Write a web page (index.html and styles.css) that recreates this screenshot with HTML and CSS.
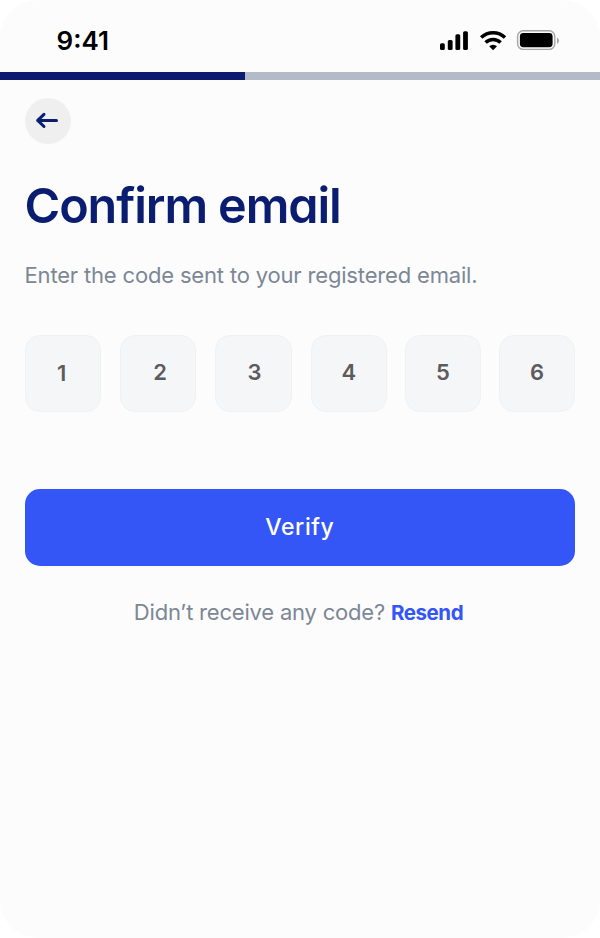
FILE: index.html
```html
<!DOCTYPE html>
<html lang="en">
<head>
<meta charset="utf-8">
<title>Confirm email</title>
<link rel="stylesheet" href="styles.css">
</head>
<body>
<main class="screen">
  <header class="status">
    <span class="time">9:41</span>
    <svg class="indicators" width="120" height="24" viewBox="0 0 120 24">
      <rect x="0" y="13.3" width="4.8" height="6.7" rx="1.5"/>
      <rect x="7.8" y="10" width="4.8" height="10" rx="1.5"/>
      <rect x="15.4" y="4.3" width="4.8" height="15.7" rx="1.5"/>
      <rect x="23.1" y="1.2" width="4.8" height="18.8" rx="1.5"/>
      <g fill="none" stroke="#000" stroke-width="3.5">
        <path d="M41.2 7.6a17.2 17.2 0 0 1 23.8 0"/>
        <path d="M45.6 12.6a10.8 10.8 0 0 1 15 0"/>
      </g>
      <path d="M53.1 20.2l-3.9-3.9a5.6 5.6 0 0 1 7.8 0z"/>
      <rect x="77.6" y="0.8" width="37.2" height="18.6" rx="5.6" fill="none" stroke="#a5a5a5" stroke-width="1.4"/>
      <rect x="79.9" y="3" width="32.7" height="14.2" rx="3.4"/>
      <path d="M117 7.8c2.6 1.2 2.6 4.8 0 6z" fill="#a5a5a5"/>
    </svg>
  </header>
  <div class="progress"><div class="progress-value"></div></div>
  <div class="content">
    <button class="back" aria-label="Back">
      <svg width="24" height="20" viewBox="0 0 24 20"><path d="M21.5 10.4H2.7M9 4.3L2.7 10.4L9 16.5" fill="none" stroke="#0a1d70" stroke-width="3" stroke-linecap="round" stroke-linejoin="round"/></svg>
    </button>
    <h1 class="title">Confirm email</h1>
    <p class="subtitle">Enter the code sent to your registered email.</p>
    <div class="code">
      <span class="digit digit-1">1</span>
      <span class="digit digit-2">2</span>
      <span class="digit digit-3">3</span>
      <span class="digit">4</span>
      <span class="digit">5</span>
      <span class="digit">6</span>
    </div>
    <button class="verify">Verify</button>
    <p class="resend"><span class="question">Didn’t receive any code?</span> <a class="resend-link">Resend</a></p>
  </div>
</main>
</body>
</html>
```
FILE: styles.css
```css
* { box-sizing: border-box; }
body { margin: 0; background: #fff; font-family: Inter, "Liberation Sans", sans-serif; }
button { border: 0; padding: 0; font-family: inherit; }
.screen { width: 600px; height: 938px; background: #fcfcfc; border-radius: 38px; overflow: hidden; }
.status { height: 72px; padding: 30px 40px 0 56.5px; display: flex; justify-content: space-between; align-items: flex-start; }
.time { font-size: 26px; line-height: 22px; font-weight: 600; letter-spacing: 0; color: #000; }
.indicators { display: block; }
.progress { height: 8px; background: #b3bbc9; }
.progress-value { width: 244.5px; height: 8px; background: #0b1c6f; }
.content { padding: 17.5px 24.5px 0; }
.back { width: 46px; height: 46px; border-radius: 50%; background: #efefef; display: flex; align-items: center; justify-content: center; }
.back svg { margin-left: -1px; margin-top: -1px; }
.title { margin: 32.6px 0 0; font-size: 48.5px; line-height: 60px; font-weight: 560; letter-spacing: -1.1px; color: #0a1d70; font-feature-settings: "cv11"; white-space: nowrap; }
.subtitle { margin: 24px 0 0; font-size: 22px; line-height: 30px; letter-spacing: -0.17px; color: #7c8796; white-space: nowrap; }
.code { margin-top: 45px; display: grid; grid-template-columns: 95.4px 95.4px 95.4px 94px 94px 76.5px; }
.digit { width: 76.5px; height: 77px; border: 1.5px solid #f0f1f2; border-radius: 15px; background: #f5f6f8; color: #5c5c5e; font-size: 22px; line-height: 73px; font-weight: 600; text-align: center; }
.digit-1 { padding-top: 1px; padding-right: 2px; }
.digit-2 { padding-left: 4px; }
.digit-3 { padding-left: 2px; }
.verify { display: block; width: 550.8px; height: 77px; margin-top: 77px; border-radius: 15px; background: #3456f6; color: #fff; font-size: 23px; line-height: 75px; font-weight: 500; letter-spacing: 0.6px; }
.resend { margin: 31px 0 0; padding-right: 3px; text-align: center; font-size: 22px; line-height: 30px; letter-spacing: -0.2px; color: #7c8796; white-space: nowrap; }
.resend-link { color: #3456f6; font-size: 20.5px; font-weight: 700; letter-spacing: -0.45px; }
```
